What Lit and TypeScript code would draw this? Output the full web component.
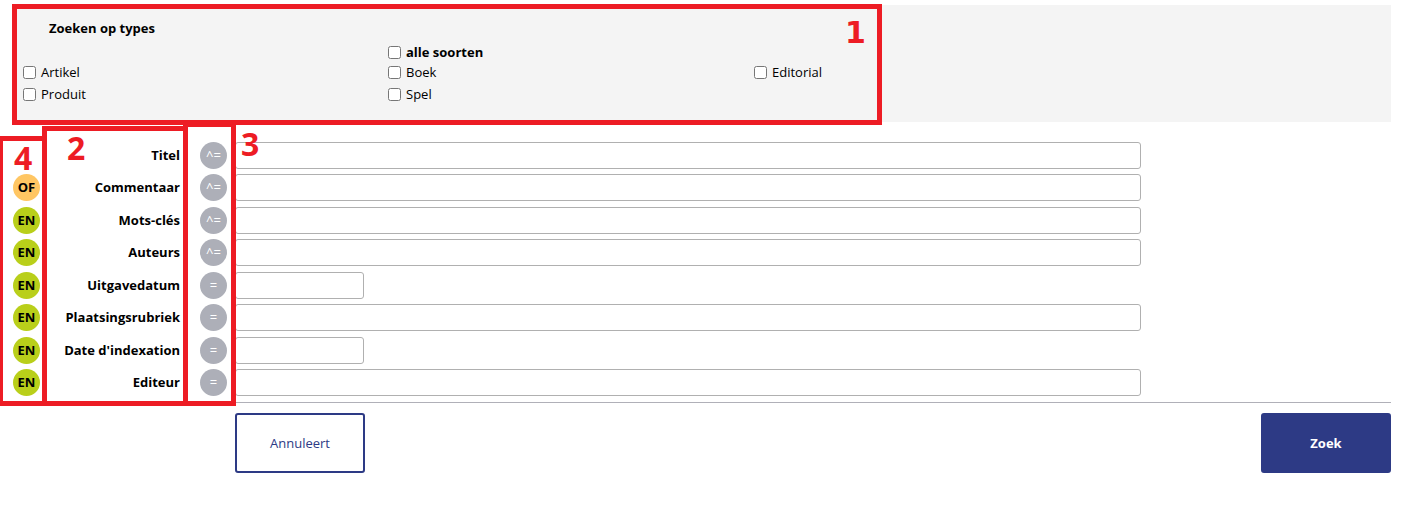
import { LitElement, html, css } from 'lit';
import { customElement } from 'lit/decorators.js';

type Field = { label: string; badge?: string; op: string; short?: boolean };

const FIELDS: Field[] = [
  { label: 'Titel', op: '^=' },
  { label: 'Commentaar', badge: 'OF', op: '^=' },
  { label: 'Mots-clés', badge: 'EN', op: '^=' },
  { label: 'Auteurs', badge: 'EN', op: '^=' },
  { label: 'Uitgavedatum', badge: 'EN', op: '=', short: true },
  { label: 'Plaatsingsrubriek', badge: 'EN', op: '=' },
  { label: "Date d'indexation", badge: 'EN', op: '=', short: true },
  { label: 'Editeur', badge: 'EN', op: '=' },
];

const TYPES = ['Artikel', 'Boek', 'Editorial', 'Produit', 'Spel'];

@customElement('app-root')
export class AppRoot extends LitElement {
  static styles = css`
    :host {
      display: block;
      position: relative;
      height: 514px;
      box-sizing: border-box;
      padding: 5px 11px 0 12px;
      font-family: 'Open Sans', 'Noto Sans', sans-serif;
      font-size: 13px;
      color: #000;
      background: #fff;
      overflow: hidden;
    }

    .types {
      height: 117px;
      box-sizing: border-box;
      padding: 14px 0 0 11px;
      background: #f4f4f4;
    }

    .types h2 {
      margin: 0 0 5px 26px;
      font-size: 13px;
      line-height: 18px;
      font-weight: 700;
    }

    .type-all {
      margin-left: 365px;
      font-weight: 700;
    }

    .type-grid {
      display: grid;
      grid-template-columns: 365px 366px 366px;
      grid-auto-rows: 22px;
    }

    label {
      display: flex;
      align-items: center;
      gap: 5px;
      height: 20px;
    }

    label input {
      width: 13px;
      height: 13px;
      margin: 0;
    }

    .fields {
      display: grid;
      grid-auto-rows: 27px;
      row-gap: 5.5px;
      margin: 19.9px 0 0 1px;
    }

    .row {
      display: grid;
      grid-template-columns: 27px 140px 47px 1fr;
      align-items: center;
    }

    .badge,
    .op {
      box-sizing: border-box;
      width: 27px;
      height: 27px;
      padding-bottom: 1px;
      border-radius: 50%;
      display: flex;
      align-items: center;
      justify-content: center;
    }

    .badge {
      font-weight: 700;
      font-size: 13px;
    }

    .badge.of {
      background: #ffc663;
    }

    .badge.en {
      background: #b9cf1a;
    }

    .name {
      margin-top: -1px;
      text-align: right;
      font-weight: 700;
    }

    .op {
      margin-left: 20px;
      background: #adafb8;
      color: #fff;
      font-size: 13px;
    }

    .field {
      box-sizing: border-box;
      height: 27px;
      width: 906px;
      margin-left: 8px;
      padding: 0 6px;
      border: 1px solid #b0b0b0;
      border-radius: 3px;
      background: #fff;
    }

    .field.short {
      width: 129px;
    }

    .footer {
      margin: 6px 0 0 223px;
      padding-top: 10px;
      border-top: 1px solid #b0b0b8;
      display: flex;
      justify-content: space-between;
    }

    button {
      box-sizing: border-box;
      width: 130px;
      height: 60px;
      border: 2px solid #2d3a85;
      border-radius: 3px;
      font-family: inherit;
      font-size: 13px;
    }

    .cancel {
      background: #fff;
      color: #2d3a85;
    }

    .search {
      background: #2d3a85;
      color: #fff;
      font-weight: 700;
    }

    /* red annotations drawn over the screenshot */
    .mark {
      position: absolute;
      box-sizing: border-box;
      border: 5px solid #ed1c24;
      pointer-events: none;
    }

    .mark-1 {
      left: 12px;
      top: 4px;
      width: 870px;
      height: 121px;
    }

    .mark-2 {
      left: 42px;
      top: 126px;
      width: 146px;
      height: 280px;
    }

    .mark-3 {
      left: 183px;
      top: 122px;
      width: 53px;
      height: 284px;
    }

    .mark-4 {
      left: -2px;
      top: 136px;
      width: 49px;
      height: 270px;
    }

    .num {
      position: absolute;
      color: #ed1c24;
      font-size: 32px;
      line-height: 32px;
      font-weight: 700;
    }

    .num-1 {
      left: 845px;
      top: 17px;
      font-family: 'DejaVu Sans', sans-serif;
      font-size: 30px;
    }

    .num-2 {
      left: 67px;
      top: 132px;
    }

    .num-3 {
      left: 241px;
      top: 128px;
    }

    .num-4 {
      left: 14px;
      top: 142px;
    }
  `;

  private renderType(name: string) {
    return html`<label><input type="checkbox" />${name}</label>`;
  }

  private renderField(f: Field) {
    return html`
      <div class="row">
        ${f.badge
          ? html`<span class="badge ${f.badge === 'OF' ? 'of' : 'en'}">${f.badge}</span>`
          : html`<span></span>`}
        <span class="name">${f.label}</span>
        <span class="op">${f.op}</span>
        <input class="field ${f.short ? 'short' : ''}" type="text" />
      </div>
    `;
  }

  render() {
    return html`
      <section class="types">
        <h2>Zoeken op types</h2>
        <label class="type-all"><input type="checkbox" />alle soorten</label>
        <div class="type-grid">${TYPES.map((t) => this.renderType(t))}</div>
      </section>

      <div class="fields">${FIELDS.map((f) => this.renderField(f))}</div>

      <div class="footer">
        <button class="cancel">Annuleert</button>
        <button class="search">Zoek</button>
      </div>

      <div class="mark mark-1"></div>
      <div class="mark mark-4"></div>
      <div class="mark mark-3"></div>
      <div class="mark mark-2"></div>
      <span class="num num-1">1</span>
      <span class="num num-2">2</span>
      <span class="num num-3">3</span>
      <span class="num num-4">4</span>
    `;
  }
}
